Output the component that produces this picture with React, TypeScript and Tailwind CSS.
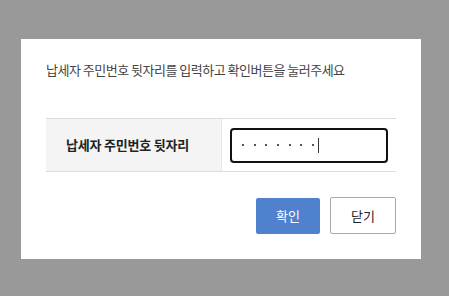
export default function App() {
  const dots = [0, 1, 2, 3, 4, 5, 6];

  return (
    <div
      className="flex h-[296px] w-[449px] items-start bg-[#999999] pl-[21px] pt-[39px]"
      style={{ fontFamily: '"Noto Sans CJK KR", "Noto Sans", sans-serif' }}
    >
      <div className="flex h-[220px] w-[400px] flex-col bg-white px-[25px] pt-[22px]">
        <p className="h-[18px] whitespace-nowrap text-[13px] leading-[18px] tracking-[-0.5px] text-[#444444]">
          납세자 주민번호 뒷자리를 입력하고 확인버튼을 눌러주세요
        </p>

        <div className="mt-[39px] flex h-[54px] border-y border-[#dddddd]">
          <div className="flex w-[175px] items-center bg-[#f4f4f4] pl-[20px] text-[13px] font-bold tracking-[-0.2px] text-[#222222]">
            납세자 주민번호 뒷자리
          </div>
          <div className="w-px bg-[#e8e8e8]" />
          <div className="flex flex-1 items-center pl-[8px]">
            <div className="flex h-[35px] w-[158px] items-center rounded-[4px] border-2 border-[#111111] pl-[10px]">
              <div className="flex items-center gap-[9.7px]">
                {dots.map((d) => (
                  <span key={d} className="block h-[2px] w-[2px] bg-[#555555]" />
                ))}
              </div>
              <span className="ml-[4px] block h-[15px] w-px bg-[#333333]" />
            </div>
          </div>
        </div>

        <div className="mt-[25px] flex justify-end gap-[10px]">
          <button className="mt-[1px] h-[36px] w-[64px] rounded-[2px] bg-[#4f81cf] text-[13px] text-white">
            확인
          </button>
          <button className="h-[37px] w-[66px] rounded-[2px] border border-[#aaaaaa] bg-white text-[13px] text-[#222222]">
            닫기
          </button>
        </div>
      </div>
    </div>
  );
}
